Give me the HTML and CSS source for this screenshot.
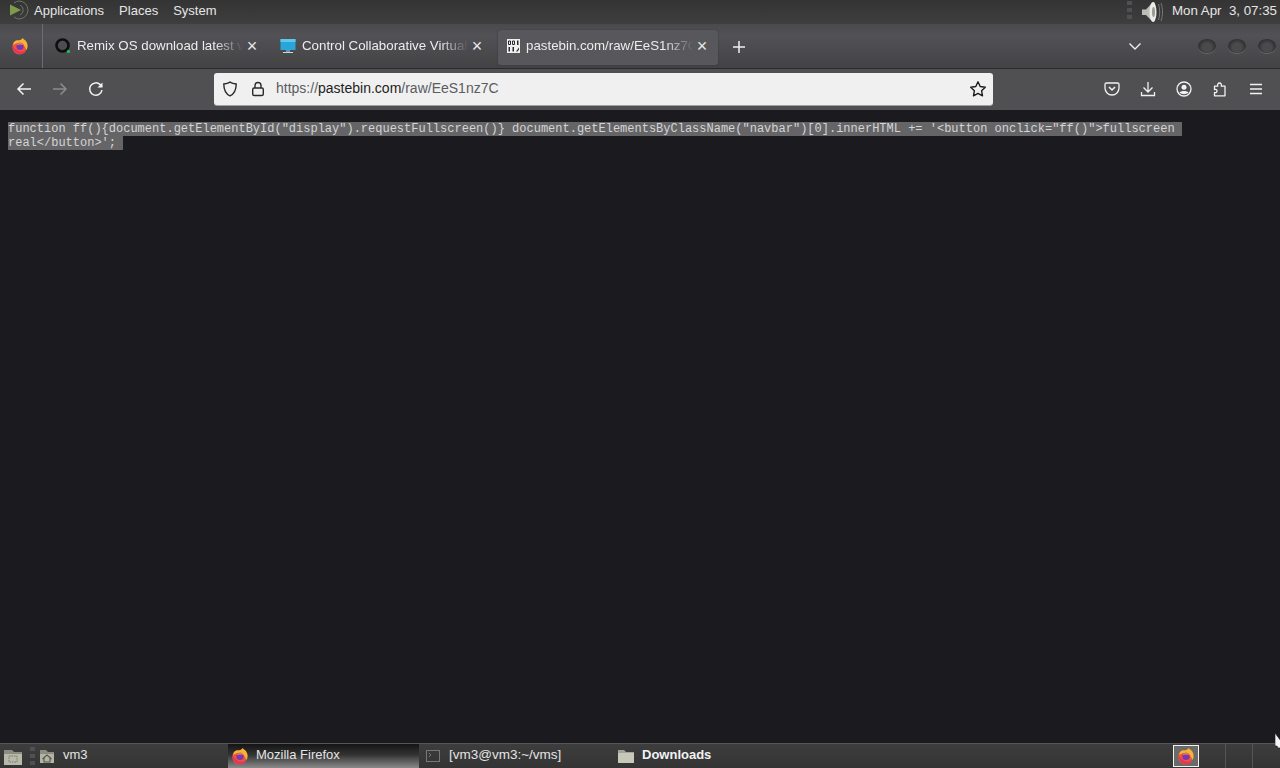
FILE: index.html
```html
<!DOCTYPE html>
<html lang="en">
<head>
<meta charset="utf-8">
<title>pastebin.com/raw/EeS1nz7C</title>
<link rel="stylesheet" href="styles.css">
</head>
<body>
<svg class="defs" width="0" height="0" aria-hidden="true">
  <symbol id="fox" viewBox="0 0 20 20">
    <circle cx="9.500" cy="11.500" r="8" fill="#ee5340"/>
    <path d="M2 9C3 4 7 3 8 4c2-1 4-1 5-3 1 2 3 2 4 4 2 3 2 7 0 9.500-1-3-3-7-6-8-3 0-6 1-9 2.500z" fill="#f9b233"/>
    <path d="M2 10c0 6 4 9 8 9 3 0 6-2 7-5-2 2-5 3-8 2-3-1-5-3-7-6z" fill="#e2355a"/>
    <circle cx="10" cy="10.500" r="4" fill="#7a37b0"/>
    <path d="M6 9c1-2 4-3 6-2 1 .5 2 1.500 2 2-2-1-5-1-8 0z" fill="#f0873a"/>
  </symbol>
</svg>

<header class="panel">
  <div class="panel-menu">
    <svg class="gnome" width="24" height="20" viewBox="0 0 24 20"><path d="M13 1a9 9 0 0 1 0 18M8 3a9 9 0 0 1 5-2M8 17a9 9 0 0 0 5 2" fill="none" stroke="#6f7561" stroke-width="1"/><path d="M14 5a5.500 5.500 0 0 1 0 10" fill="none" stroke="#6f7561" stroke-width="1"/><path d="M4 4.500L15 10 4 15.500z" fill="#7f9a4a"/></svg>
    <span>Applications</span><span>Places</span><span>System</span>
  </div>
  <div class="panel-tray">
    <span class="grip"></span>
    <svg class="speaker" width="24" height="24" viewBox="0 0 24 24"><path d="M2 9.500h4l7-7.500 2 1v18l-2 1-7-7H2z" fill="#bdbdb6"/><ellipse cx="13" cy="12" rx="3.500" ry="10" fill="#ecece8"/><ellipse cx="13.500" cy="12" rx="1.500" ry="5" fill="#9a9a94"/><path d="M18.500 4c1.600 5 1.600 11 0 16M21 3c2 6 2 12 0 18" stroke="#77777a" fill="none"/></svg>
    <span class="clock">Mon Apr &nbsp;3, 07:35</span>
  </div>
</header>

<nav class="tabbar">
  <div class="fox-slot"><svg width="18" height="18"><use href="#fox"/></svg></div>
  <div class="tab">
    <svg class="favicon" width="16" height="16" viewBox="0 0 16 16"><circle cx="7.500" cy="7.500" r="6" fill="none" stroke="#0d0f0f" stroke-width="2.600"/><circle cx="13.500" cy="13.500" r="1.700" fill="#1db954"/></svg>
    <span class="tab-title">Remix OS download latest v</span>
    <span class="tab-close">×</span>
  </div>
  <div class="tab">
    <svg class="favicon" width="16" height="16" viewBox="0 0 16 16"><rect x="0.500" y="1" width="15" height="11" fill="#2aa5d8"/><path d="M0.500 1h15v3h-15z" fill="#5cc8ea"/><rect x="6" y="12" width="4" height="2" fill="#6c93a5"/><rect x="3" y="14" width="10" height="1" fill="#c8d8de"/></svg>
    <span class="tab-title">Control Collaborative Virtual</span>
    <span class="tab-close">×</span>
  </div>
  <div class="tab tab-active">
    <svg class="favicon" width="13" height="14" viewBox="0 0 13 14"><rect width="13" height="14" fill="#efefef"/><path d="M1.500 2h2v3.500h-2zM5.500 2h2v3.500h-2z" fill="none" stroke="#2a2a2a"/><path d="M10 1.500h1.500v4.500H10zM1.500 8H3v4.500H1.500zM5.500 8H7v4.500H5.500zM9 12.500l3-4v2l-1.500 2z" fill="#2a2a2a"/></svg>
    <span class="tab-title">pastebin.com/raw/EeS1nz7C</span>
    <span class="tab-close">×</span>
  </div>
  <svg class="plus" width="14" height="14" viewBox="0 0 14 14"><path d="M7 1v12M1 7h12" stroke="#f0f0f0" stroke-width="1.500"/></svg>
  <div class="tabbar-end">
    <svg width="14" height="14" viewBox="0 0 14 14"><path d="M1.500 4.500L7 10l5.500-5.500" stroke="#eee" stroke-width="1.400" fill="none"/></svg>
    <div class="win-buttons"><span class="win-btn"></span><span class="win-btn"></span><span class="win-btn"></span></div>
  </div>
</nav>

<div class="toolbar">
  <div class="nav-buttons">
    <svg width="16" height="16" viewBox="0 0 16 16"><path d="M15 8H2M7.500 2.500L2 8l5.500 5.500" stroke="#f2f2f2" stroke-width="1.500" fill="none"/></svg>
    <svg width="16" height="16" viewBox="0 0 16 16"><path d="M1 8h13M8.500 2.500L14 8l-5.500 5.500" stroke="#8b8b8e" stroke-width="1.500" fill="none"/></svg>
    <svg width="16" height="16" viewBox="0 0 16 16"><path d="M14 9a6.200 6.200 0 1 1-1.800-5.400L14 5.500" stroke="#f2f2f2" stroke-width="1.500" fill="none"/><path d="M14.500 1.500v5h-5z" fill="#f2f2f2"/></svg>
  </div>
  <div class="urlbar">
    <svg width="16" height="16" viewBox="0 0 16 16"><path d="M8 1.200c2 1.300 4 1.700 6.200 1.800 0 5.500-1.500 9.800-6.200 11.800C3.300 12.800 1.800 8.500 1.800 3 4 2.900 6 2.500 8 1.200z" stroke="#2a2a2e" stroke-width="1.400" fill="none"/></svg>
    <svg class="lock" width="14" height="16" viewBox="0 0 14 16"><rect x="1.700" y="7" width="10.600" height="7.500" rx="1.500" stroke="#2a2a2e" stroke-width="1.400" fill="none"/><path d="M4 7V4.500a3 3 0 0 1 6 0V7" stroke="#2a2a2e" stroke-width="1.400" fill="none"/></svg>
    <span class="url"><span class="url-dim">https://</span>pastebin.com<span class="url-dim">/raw/EeS1nz7C</span></span>
    <svg class="star" width="18" height="18" viewBox="0 0 18 18"><path d="M9 1.800l2.200 4.700 5.100.7-3.700 3.500.9 5.100L9 13.400l-4.500 2.400.9-5.100L1.700 7.200l5.100-.7z" stroke="#1d1d20" stroke-width="1.400" fill="none" stroke-linejoin="round"/></svg>
  </div>
  <div class="tools">
    <svg width="16" height="16" viewBox="0 0 16 16"><path d="M2.500 2h11A1.500 1.500 0 0 1 15 3.500V7A7 7 0 0 1 1 7V3.500A1.500 1.500 0 0 1 2.500 2z" stroke="#f2f2f2" stroke-width="1.300" fill="none"/><path d="M5 6l3 3 3-3" stroke="#f2f2f2" stroke-width="1.500" fill="none"/></svg>
    <svg width="16" height="16" viewBox="0 0 16 16"><path d="M8 1v9.500M3.500 6.500L8 11l4.500-4.500M1.500 11v3.500h13V11" stroke="#f2f2f2" stroke-width="1.300" fill="none"/></svg>
    <svg width="16" height="16" viewBox="0 0 16 16"><circle cx="8" cy="8" r="7" stroke="#f2f2f2" stroke-width="1.300" fill="none"/><circle cx="8" cy="6.200" r="2.500" fill="#f2f2f2"/><path d="M3.500 11.500c1.500-2 7.500-2 9 0-2 2.200-7 2.200-9 0z" fill="#f2f2f2"/></svg>
    <svg width="16" height="16" viewBox="0 0 16 16"><path d="M2.500 14.800V11.500c1.300.6 2.500-.2 2.500-1.500S3.800 8 2.500 8.600V5.200H5.800C5.200 3.800 6 2 7.500 2S9.900 3.800 9.200 5.200H13V14.800z" stroke="#f2f2f2" stroke-width="1.300" fill="none" stroke-linejoin="round"/></svg>
    <svg width="16" height="16" viewBox="0 0 16 16"><path d="M2 3.500h12M2 8h12M2 12.500h12" stroke="#f2f2f2" stroke-width="1.400"/></svg>
  </div>
</div>

<main class="content">
  <pre class="raw"><span class="sel">function ff(){document.getElementById("display").requestFullscreen()} document.getElementsByClassName("navbar")[0].innerHTML += '&lt;button onclick="ff()"&gt;fullscreen </span>
<span class="sel">real&lt;/button&gt;'; </span></pre>
</main>

<footer class="taskbar">
  <div class="launchers">
    <svg width="20" height="19" viewBox="0 0 20 19"><path d="M1 3h8l2 2h8v13H1z" fill="#8c8c80"/><path d="M1 7h18v11H1z" fill="#b9b9aa"/><rect x="6" y="9" width="8" height="6" fill="none" stroke="#77776c" stroke-dasharray="1.500 1"/></svg>
    <span class="grip"></span>
    <svg width="16" height="15" viewBox="0 0 16 15"><path d="M1 1h6l2 2h6v11H1z" fill="#8c8c80"/><path d="M1 5h14v9H1z" fill="#b4b4a6"/><path d="M3.500 10L8 6l4.500 4M5 9v4h6V9" stroke="#55554e" stroke-width="1.100" fill="none"/></svg>
    <span class="task-label">vm3</span>
  </div>
  <div class="task task-active">
    <svg width="18" height="18"><use href="#fox"/></svg>
    <span>Mozilla Firefox</span>
  </div>
  <div class="task task-term">
    <svg width="14" height="14" viewBox="0 0 14 14"><rect x="0.500" y="1.500" width="13" height="11" fill="none" stroke="#77777a"/><path d="M3 4l2 2-2 2" stroke="#77777a" fill="none"/></svg>
    <span>[vm3@vm3:~/vms]</span>
  </div>
  <div class="task task-folder">
    <svg width="16" height="15" viewBox="0 0 16 15"><path d="M0 1h6l2 2h8v11H0z" fill="#a3a397"/><path d="M0 4h16v10H0z" fill="#c8c8b8"/></svg>
    <strong>Downloads</strong>
  </div>
  <div class="tray-end">
    <div class="pager-active"><svg width="18" height="18"><use href="#fox"/></svg></div>
    <span class="pager-cell"></span>
    <span class="pager-cell"></span>
  </div>
</footer>

<svg class="cursor" width="6" height="16" viewBox="0 0 6 16"><path d="M0 0l6 8v7H3l-1-2H0z" fill="#f4f4f4" stroke="#111" stroke-width=".6"/></svg>
</body>
</html>
```

FILE: styles.css
```css
* { box-sizing: border-box; }
html, body { margin: 0; height: 100%; }
body {
  width: 1280px;
  height: 768px;
  overflow: hidden;
  display: flex;
  flex-direction: column;
  position: relative;
  font-family: "Liberation Sans", Arial, sans-serif;
  background: #1b1b1f;
}
.defs { position: absolute; }
svg { display: block; flex: none; }

.panel {
  height: 24px;
  flex: none;
  display: flex;
  justify-content: space-between;
  align-items: center;
  padding: 0 3px 4px 6px;
  background: linear-gradient(#343434, #3e3e3e);
  color: #e6e6e6;
  font-size: 13px;
}
.panel-menu { display: flex; align-items: center; }
.panel-menu span { margin-right: 15px; }
.gnome { margin-right: 4px; }
.panel-tray { display: flex; align-items: center; gap: 8px; }
.speaker { margin-bottom: -3px; }
.grip {
  width: 5px;
  height: 18px;
  background: repeating-linear-gradient(#505054 0 4px, transparent 4px 7px);
}
.clock { font-size: 13.3px; white-space: nowrap; }

.tabbar {
  height: 45px;
  flex: none;
  display: flex;
  align-items: center;
  padding-top: 2px;
  background: linear-gradient(#4a4a4d, #525256 25%, #434346);
  border-bottom: 1px solid #2a2a2c;
  color: #ececec;
  font-size: 13.3px;
}
.fox-slot {
  width: 43px;
  height: 44px;
  margin-top: -2px;
  display: flex;
  align-items: center;
  padding-left: 11px;
  margin-right: 1px;
  border-right: 1px solid #6d6d70;
}
.tab {
  width: 225px;
  height: 35px;
  display: flex;
  align-items: center;
  padding: 0 10px 3px 11px;
}
.tab-active {
  width: 220px;
  margin-left: 4px;
  padding: 0 9px 3px 9px;
  background: #58585c;
  border-radius: 3px;
  box-shadow: 0 0 2px #38383a;
}
.favicon { margin-right: 6px; }
.tab-title {
  flex: 1;
  min-width: 0;
  overflow: hidden;
  white-space: nowrap;
  -webkit-mask-image: linear-gradient(90deg, #000 82%, transparent 99%);
  mask-image: linear-gradient(90deg, #000 82%, transparent 99%);
}
.tab-close { width: 14px; flex: none; font-size: 18px; line-height: 14px; text-align: center; color: #e8e8e8; }
.plus { margin-left: 14px; }
.tabbar-end { margin-left: auto; margin-bottom: 2px; display: flex; align-items: center; }
.win-buttons { display: flex; gap: 12px; margin-left: 56px; margin-right: 4px; }
.win-btn {
  width: 18px;
  height: 14px;
  border-radius: 50%;
  background: radial-gradient(ellipse at 50% 60%, #4a4a4c 35%, #2c2c2e 75%);
  box-shadow: 0 1px 0 #66666a;
}

.toolbar {
  height: 41px;
  flex: none;
  display: flex;
  align-items: center;
  padding-bottom: 1px;
  background: #505053;
}
.nav-buttons { display: flex; gap: 20px; padding-left: 16px; width: 214px; }
.urlbar {
  width: 779px;
  height: 32px;
  display: flex;
  align-items: center;
  padding: 0 6px 0 8px;
  background: #f0f0f0;
  border-radius: 3px;
  box-shadow: 0 1px 0 #a0a0a0;
  color: #1d1d20;
  font-size: 14px;
}
.lock { margin-left: 13px; }
.url { margin-left: 11px; flex: 1; padding-bottom: 2px; }
.url-dim { color: #5b5b60; }
.tools { display: flex; gap: 20px; margin-left: 111px; }

.content { flex: 1; min-height: 0; padding: 12px 8px 0; background: #1b1b1f; }
.raw {
  margin: 0;
  width: 1200px;
  font-family: "Liberation Mono", "Courier New", monospace;
  font-size: 12px;
  line-height: 14px;
  color: #c8c8c8;
  white-space: pre;
}
.sel { background: #656567; color: #d4d4d4; }

.taskbar {
  height: 25px;
  flex: none;
  display: flex;
  align-items: center;
  background: linear-gradient(#3d3d3d, #343434);
  border-top: 1px solid #565656;
  color: #e4e4e4;
  font-size: 13px;
}
.launchers { width: 228px; display: flex; align-items: center; padding-left: 3px; }
.launchers .grip { margin: 0 4px 0 7px; }
.task-label { margin-left: 8px; padding-bottom: 3px; }
.task { display: flex; align-items: center; height: 24px; }
.task span, .task strong { padding-bottom: 3px; }
.task-active {
  width: 191px;
  padding-left: 3px;
  gap: 7px;
  background: linear-gradient(#141414, #333 45%, #8a8a8a);
}
.task-term { width: 199px; padding-left: 7px; gap: 9px; font-size: 13.5px; }
.task-folder { gap: 8px; }
.task-folder strong { font-weight: 700; color: #f2f2f2; }
.tray-end { margin-left: auto; display: flex; align-items: center; height: 24px; padding-right: 27px; }
.pager-active {
  width: 26px;
  height: 22px;
  display: flex;
  align-items: center;
  justify-content: center;
  background: #6a6a68;
  border: 1px solid #f2f2f2;
}
.pager-cell { width: 27px; height: 24px; border-right: 1px solid #555; }
.cursor { position: absolute; left: 1275px; top: 733px; }
```
